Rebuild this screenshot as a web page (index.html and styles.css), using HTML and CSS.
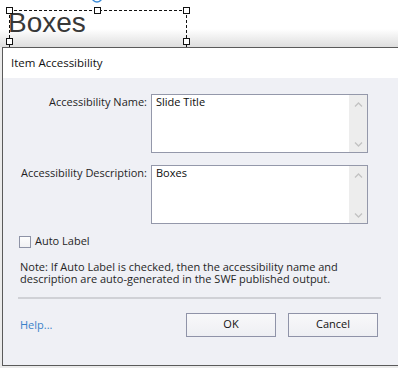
FILE: index.html
```html
<!DOCTYPE html>
<html lang="en">
<head>
    <meta charset="UTF-8">
    <title>Item Accessibility</title>
    <link rel="stylesheet" href="styles.css">
</head>
<body>
    <div class="stage">
        <div class="slide-text">Boxes</div>
        <div class="selection">
            <span class="handle h-tl"></span>
            <span class="handle h-tm"></span>
            <span class="handle h-tr"></span>
            <span class="handle h-ml"></span>
            <span class="handle h-mr"></span>
        </div>
        <svg class="rotate" width="20" height="6" viewBox="0 0 20 6">
            <circle cx="8" cy="-3" r="5" fill="none" stroke="#3b8ad6" stroke-width="1.4"/>
        </svg>
    </div>

    <div class="dialog">
        <div class="dialog-title">Item Accessibility</div>
        <div class="dialog-body">
            <div class="form">
                <label class="form-label">Accessibility Name:</label>
                <div class="field">
                    <div class="field-text">Slide Title</div>
                    <div class="scroll">
                        <svg width="9" height="5" viewBox="0 0 9 5"><path d="M1 4.5 L4.5 1 L8 4.5" fill="none" stroke="#c3c3c3" stroke-width="1.4"/></svg>
                        <svg width="9" height="5" viewBox="0 0 9 5"><path d="M1 0.5 L4.5 4 L8 0.5" fill="none" stroke="#c3c3c3" stroke-width="1.4"/></svg>
                    </div>
                </div>

                <label class="form-label">Accessibility Description:</label>
                <div class="field">
                    <div class="field-text">Boxes</div>
                    <div class="scroll">
                        <svg width="9" height="5" viewBox="0 0 9 5"><path d="M1 4.5 L4.5 1 L8 4.5" fill="none" stroke="#c3c3c3" stroke-width="1.4"/></svg>
                        <svg width="9" height="5" viewBox="0 0 9 5"><path d="M1 0.5 L4.5 4 L8 0.5" fill="none" stroke="#c3c3c3" stroke-width="1.4"/></svg>
                    </div>
                </div>
            </div>

            <div class="check-row">
                <span class="checkbox"></span>
                <span>Auto Label</span>
            </div>

            <p class="note">Note: If Auto Label is checked, then the accessibility name and description are auto-generated in the SWF published output.</p>

            <div class="separator"></div>

            <div class="footer">
                <a class="help" href="#">Help...</a>
                <div class="buttons">
                    <button class="btn">OK</button>
                    <button class="btn">Cancel</button>
                </div>
            </div>
        </div>
    </div>
</body>
</html>
```
FILE: styles.css
```css
body {
    margin: 0;
    overflow: hidden;
    background: #ebebeb;
    font-family: "Open Sans", "Noto Sans", sans-serif;
    font-size: 11px;
    color: #1f1f1f;
}

/* slide canvas behind the dialog */
.stage {
    position: relative;
    height: 47px;
    overflow: hidden;
    background: linear-gradient(to bottom, #ffffff 0, #ffffff 29px, #dedede 47px);
}
.slide-text {
    position: absolute;
    left: 8px;
    top: 9px;
    font-family: "Liberation Sans", Arial, sans-serif;
    font-size: 28px;
    line-height: 28px;
    color: #383838;
}
.selection {
    position: absolute;
    left: 9px;
    top: 10px;
    width: 176px;
    height: 61px;
    border: 1px dashed #111;
}
.handle {
    position: absolute;
    width: 5px;
    height: 5px;
    background: #fff;
    border: 1px solid #111;
}
.h-tl { left: -4px; top: -4px; }
.h-tm { left: 84px; top: -4px; }
.h-tr { right: -4px; top: -4px; }
.h-ml { left: -4px; top: 27px; }
.h-mr { right: -4px; top: 27px; }
.rotate {
    position: absolute;
    left: 89px;
    top: 0;
}

/* dialog */
.dialog {
    margin-left: 2px;
    width: 395px;
    border: 1px solid #5a5a5a;
    border-right: none;
    background: #eff0f5;
}
.dialog-title {
    height: 30px;
    line-height: 30px;
    padding-left: 8px;
    background: #fff;
    font-size: 11.5px;
    color: #111;
}
.dialog-body {
    padding: 16px 17px 28px 16px;
}
.form {
    display: grid;
    grid-template-columns: 128px 217px;
    column-gap: 4px;
    row-gap: 12px;
}
.form-label {
    text-align: right;
    white-space: nowrap;
    padding-top: 1px;
    line-height: 13px;
}
.field {
    display: flex;
    height: 57px;
    border: 1px solid #9498aa;
    background: #fff;
}
.field-text {
    flex: 1;
    padding-left: 4px;
    line-height: 13px;
    color: #0d0d0d;
}
.scroll {
    width: 18px;
    background: #ededed;
    display: flex;
    flex-direction: column;
    justify-content: space-between;
    align-items: center;
    padding: 7px 0 5px;
    box-sizing: border-box;
}
.scroll svg {
    display: block;
}
.check-row {
    display: flex;
    gap: 4px;
    height: 13px;
    line-height: 13px;
    margin-top: 10px;
}
.checkbox {
    width: 10px;
    height: 10px;
    margin-top: 2px;
    border: 1px solid #8e93a6;
    background: linear-gradient(#fdfdfd, #f1f1f3);
}
.note {
    margin: 14px 0 0 1px;
    width: 345px;
    line-height: 12px;
    color: #262626;
}
.separator {
    margin: 12px 0 0 -1px;
    width: 363px;
    height: 2px;
    background: #d0d1d6;
}
.footer {
    display: flex;
    align-items: center;
    margin-top: 14px;
    padding-right: 3px;
}
.help {
    margin-left: 1px;
    padding-bottom: 2px;
    line-height: 13px;
    color: #3b82c9;
    text-decoration: none;
}
.buttons {
    margin-left: auto;
    display: flex;
    gap: 12px;
}
.btn {
    width: 90px;
    height: 24px;
    padding: 0 0 2px;
    line-height: 20px;
    border: 1px solid #8f93a8;
    border-radius: 0;
    background: linear-gradient(#f8f8fa, #eeeff3);
    font-family: "Open Sans", "Noto Sans", sans-serif;
    font-size: 11px;
    color: #111;
}
```
